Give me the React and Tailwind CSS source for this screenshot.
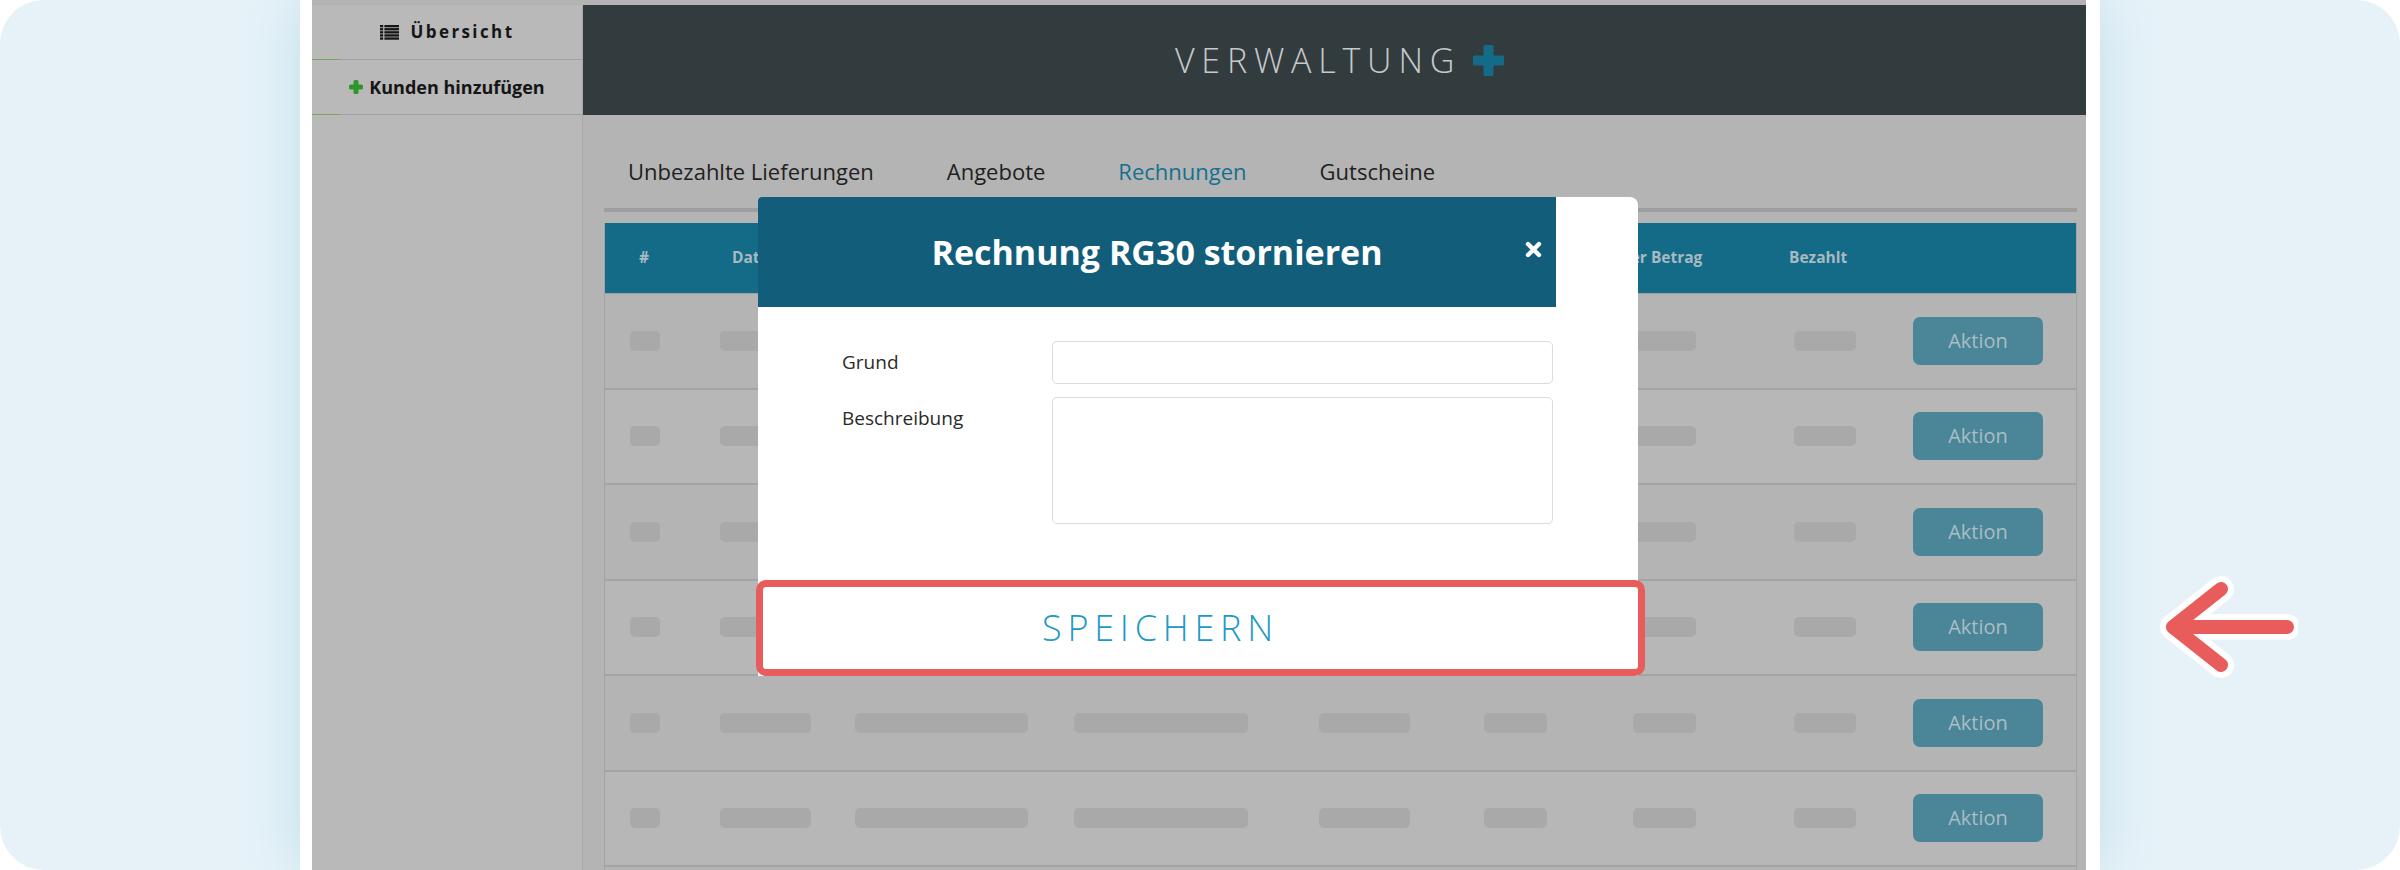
import React from 'react';

const tracks = 'grid grid-cols-[90px_135px_219px_245px_165px_149px_161px_119px_1fr] pl-[25px]';
const pills = ['w-[30px]', 'w-[91px]', 'w-[173px]', 'w-[174px]', 'w-[91px]', 'w-[63px]', 'w-[63px]', 'w-[62px]'];

function ListIcon() {
    return (
        <svg width="19" height="15" viewBox="0 0 19 15" fill="#151515">
            {[0, 1, 2, 3, 4].map((i) => (
                <g key={i}>
                    <rect x="0" y={i * 3.1} width="3.2" height="2.3" />
                    <rect x="4.4" y={i * 3.1} width="14.6" height="2.3" />
                </g>
            ))}
        </svg>
    );
}

function PlusIcon({ size, bar, color }) {
    const off = (size - bar) / 2;
    return (
        <svg width={size} height={size} viewBox={`0 0 ${size} ${size}`} fill={color}>
            <rect x={off} y="0" width={bar} height={size} rx="1.5" />
            <rect x="0" y={off} width={size} height={bar} rx="1.5" />
        </svg>
    );
}

function SidebarDivider() {
    return (
        <div className="flex h-px">
            <div className="w-[28px] bg-[#74a85a]" />
            <div className="flex-1 bg-[#a1a1a1]" />
        </div>
    );
}

function Row({ index }) {
    return (
        <div className={`${tracks} h-[95.5px] shrink-0 items-center border-b-2 border-[#a4a4a4] ${index % 2 ? 'bg-[#b7b7b7]' : 'bg-[#b4b4b4]'}`}>
            {pills.map((w, i) => (
                <div key={i} className={`${w} h-[20px] rounded-[5px] bg-[#a9a9a9]`} />
            ))}
            <div className="flex h-[48px] w-[130px] items-center justify-center rounded-[7px] bg-[#4a8598] text-[20px] text-[#a9bec5]">
                Aktion
            </div>
        </div>
    );
}

export default function App() {
    return (
        <div className="h-[870px] w-[2400px] bg-white font-['Open_Sans',sans-serif]">
            <div className="flex h-full overflow-hidden rounded-[44px] bg-[#e6f2f8]">
                <div className="w-[300px] shrink-0" />

                <div className="relative flex w-[1800px] shrink-0 flex-col overflow-hidden border-l-[12px] border-r-[14px] border-white shadow-[0_0_50px_rgba(150,200,225,0.45)]">
                    <div className="h-[5px] shrink-0 bg-[#b3b3b3]" />
                    <div className="flex min-h-0 flex-1">
                        <aside className="w-[271px] shrink-0 border-r border-[#a9a9a9] bg-[#b9b9b9]">
                            <div className="flex h-[54px] items-center justify-center gap-[12px]">
                                <ListIcon />
                                <span className="text-[17px] font-bold tracking-[2.4px] text-[#151515]">Übersicht</span>
                            </div>
                            <SidebarDivider />
                            <div className="flex h-[54px] items-center justify-center gap-[6px]">
                                <PlusIcon size={14} bar={5} color="#2f962c" />
                                <span className="text-[18px] font-bold text-[#151515]">Kunden hinzufügen</span>
                            </div>
                            <SidebarDivider />
                        </aside>

                        <main className="flex min-w-0 flex-1 flex-col">
                            <header className="flex h-[110px] shrink-0 items-center justify-center gap-[12px] bg-[#323c3e] pl-[10px]">
                                <span className="text-[34px] font-light tracking-[0.2em] text-[#c6c9ca]">VERWALTUNG</span>
                                <PlusIcon size={31} bar={10} color="#146b88" />
                            </header>

                            <div className="flex min-h-0 flex-1 flex-col bg-[#b4b4b4] pl-[21px] pr-[9px]">
                                <nav className="flex h-[93px] shrink-0 items-end gap-[73px] pb-[20px] pl-[24px] text-[22px] text-[#1f1f1f]">
                                    <span>Unbezahlte Lieferungen</span>
                                    <span>Angebote</span>
                                    <span className="text-[#15708e]">Rechnungen</span>
                                    <span>Gutscheine</span>
                                </nav>
                                <div className="h-[4px] shrink-0 bg-[#9e9e9e]" />

                                <div className="mt-[11px] flex shrink-0 flex-col border-x border-[#a3a3a3]">
                                    <div className={`${tracks} h-[71px] shrink-0 items-center border-b border-[#a0a0a0] bg-[#146b88] text-[15.5px] font-bold text-[#a8bac1]`}>
                                        <span className="pl-[9px]">#</span>
                                        <span className="pl-[12px]">Datum</span>
                                        <span>Kunde</span>
                                        <span>Rechnungsnummer</span>
                                        <span>Betrag</span>
                                        <span />
                                        <span className="-ml-[46px] whitespace-nowrap">Offener Betrag</span>
                                        <span className="-ml-[5px]">Bezahlt</span>
                                        <span />
                                    </div>
                                    {[0, 1, 2, 3, 4, 5, 6].map((i) => (
                                        <Row key={i} index={i} />
                                    ))}
                                </div>
                            </div>
                        </main>
                    </div>

                    <div className="absolute left-[446px] top-[197px] flex w-[880px] flex-col rounded-tl-[4px] rounded-tr-[8px] bg-white">
                        <div className="relative flex h-[110px] w-[798px] items-center justify-center rounded-tl-[4px] bg-[#125d79]">
                            <h3 className="text-[34px] font-bold text-white">Rechnung RG30 stornieren</h3>
                            <svg className="absolute right-[14px] top-[44px]" width="17" height="17" viewBox="0 0 17 17">
                                <path d="M3 3 L14 14 M14 3 L3 14" stroke="white" strokeWidth="4.4" strokeLinecap="round" />
                            </svg>
                        </div>
                        <div className="grid h-[273px] w-[798px] grid-cols-[210px_501px] content-start gap-y-[13px] pl-[84px] pt-[34px]">
                            <label className="pt-[7px] text-[19px] font-medium text-[#2a2a2a]">Grund</label>
                            <div className="h-[43px] rounded-[5px] border-[1.5px] border-[#dcdcdc] bg-white" />
                            <label className="pt-[7px] text-[19px] font-medium text-[#2a2a2a]">Beschreibung</label>
                            <div className="h-[127px] rounded-[5px] border-[1.5px] border-[#dcdcdc] bg-white" />
                        </div>
                        <div className="-ml-[2px] -mr-[7px] flex h-[96px] items-center justify-center rounded-[10px] border-[7px] border-[#e85c5c] bg-white pl-[8px] pr-[88px]">
                            <span className="text-[36px] font-light tracking-[0.16em] text-[#1c99c6]">SPEICHERN</span>
                        </div>
                    </div>
                </div>

                <div className="flex-1 pl-[58px] pt-[565px]">
                    <svg width="140" height="120" viewBox="0 0 140 120" fill="none" strokeLinecap="round" strokeLinejoin="round">
                        <path d="M63 24 L15 62 L63 100 M15 62 L129 62" stroke="white" strokeWidth="26" />
                        <path d="M63 24 L15 62 L63 100 M15 62 L129 62" stroke="#e85c5c" strokeWidth="14" />
                    </svg>
                </div>
            </div>
        </div>
    );
}
